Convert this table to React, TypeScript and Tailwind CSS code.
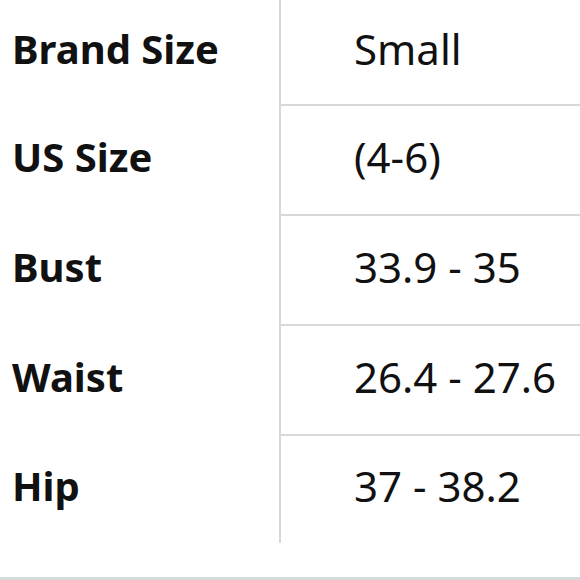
const rows = [
  { label: "Brand Size", value: "Small", h: "h-[106px]" },
  { label: "US Size", value: "(4-6)", h: "h-[110px]" },
  { label: "Bust", value: "33.9 - 35", h: "h-[110px]" },
  { label: "Waist", value: "26.4 - 27.6", h: "h-[110px]" },
  { label: "Hip", value: "37 - 38.2", h: "h-[107px]" },
];

export default function App() {
  return (
    <div className="w-[580px] h-[580px] bg-white flex flex-col overflow-hidden font-['Noto_Sans',sans-serif] text-[#111]">
      <div className="flex flex-col">
        {rows.map((r, i) => (
          <div key={r.label} className={`flex ${r.h}`}>
            <div className="w-[279px] flex items-center pl-3 pb-2 text-[40px] font-bold">
              {r.label}
            </div>
            <div
              className={`flex-1 flex items-center pl-[73px] pb-2 text-[42px] border-l-2 border-[#d5d9d9] ${
                i < rows.length - 1 ? "border-b-2" : ""
              }`}
            >
              {r.value}
            </div>
          </div>
        ))}
      </div>
      <div className="mt-auto h-[3px] bg-[#d5dbdb]" />
    </div>
  );
}
